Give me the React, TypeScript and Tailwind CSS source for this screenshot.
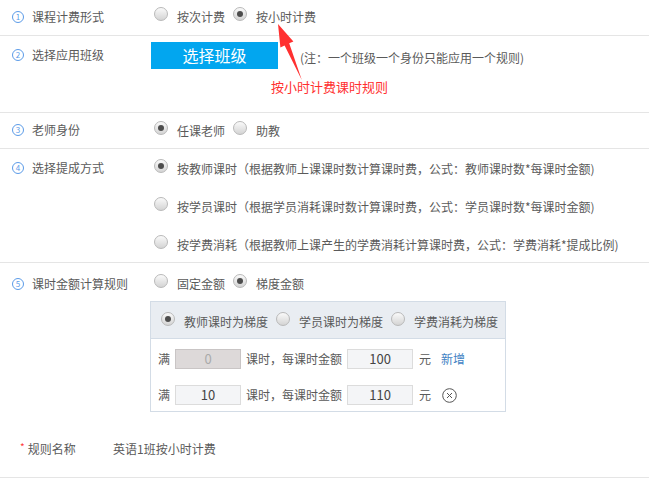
import React from 'react';

const font = { fontFamily: '"Noto Sans CJK SC", "Noto Sans", sans-serif' };

const Radio: React.FC<{ checked?: boolean }> = ({ checked }) => (
  <span className="flex w-[14px] h-[14px] shrink-0 items-center justify-center rounded-full border border-[#b9b9b9] bg-linear-to-b from-[#fafafa] to-[#d4d4d4]">
    {checked && <span className="w-[6px] h-[6px] rounded-full bg-[#4d4d4d]" />}
  </span>
);

const Option: React.FC<{ checked?: boolean; label: string; gap?: string }> = ({ checked, label, gap = 'mr-[8px]' }) => (
  <div className={`flex items-start ${gap}`}>
    <Radio checked={checked} />
    <span className="ml-[9px] mt-[1px] leading-[18px] whitespace-nowrap">{label}</span>
  </div>
);

const StepLabel: React.FC<{ n: number; text: string; pt: string }> = ({ n, text, pt }) => (
  <div className={`self-start w-[150px] shrink-0 pl-[12px] flex items-center gap-[8px] ${pt}`}>
    <span className="flex w-[12px] h-[12px] items-center justify-center rounded-full border border-[#5b9be8] text-[8px] leading-none text-[#5b9be8]">
      {n}
    </span>
    <span className="leading-[16px] whitespace-nowrap">{text}</span>
  </div>
);

const CloseIcon = () => (
  <svg width="15" height="15" viewBox="0 0 15 15" fill="none" stroke="#555" strokeWidth="1">
    <circle cx="7.5" cy="7.5" r="6.8" />
    <path d="M5 5l5 5M10 5l-5 5" />
  </svg>
);

export default function App() {
  return (
    <div className="relative w-[649px] h-[479px] bg-white text-[12px] text-[#5a5a5a] overflow-hidden" style={font}>
      {/* 1 */}
      <div className="flex items-start h-[36px] border-b border-[#e5e5e5]">
        <StepLabel n={1} text="课程计费形式" pt="pt-[9px]" />
        <div className="flex items-start pt-[7px] pl-[4px]">
          <Option label="按次计费" />
          <Option checked label="按小时计费" />
        </div>
      </div>

      {/* 2 */}
      <div className="flex items-start h-[77px] border-b border-[#e5e5e5]">
        <StepLabel n={2} text="选择应用班级" pt="pt-[11px]" />
        <div className="flex items-start pl-[1px]">
          <button className="mt-[6px] w-[127px] h-[27px] bg-[#02a6ef] text-white text-[16px] leading-[27px]">
            选择班级
          </button>
          <span className="ml-[22px] mt-[14px] leading-[16px] whitespace-nowrap">(注：一个班级一个身份只能应用一个规则)</span>
        </div>
      </div>

      {/* 3 */}
      <div className="flex items-start h-[36px] border-b border-[#e5e5e5]">
        <StepLabel n={3} text="老师身份" pt="pt-[9px]" />
        <div className="flex items-start pt-[8px] pl-[4px]">
          <Option checked label="任课老师" />
          <Option label="助教" />
        </div>
      </div>

      {/* 4 */}
      <div className="flex items-start h-[114px] border-b border-[#e5e5e5]">
        <StepLabel n={4} text="选择提成方式" pt="pt-[11px]" />
        <div className="flex flex-col items-start gap-[19px] pt-[10px] pl-[4px]">
          <Option checked label="按教师课时（根据教师上课课时数计算课时费，公式：教师课时数*每课时金额)" />
          <Option label="按学员课时（根据学员消耗课时数计算课时费，公式：学员课时数*每课时金额)" />
          <Option label="按学费消耗（根据教师上课产生的学费消耗计算课时费，公式：学费消耗*提成比例)" />
        </div>
      </div>

      {/* 5 */}
      <div className="flex items-start h-[150px]">
        <StepLabel n={5} text="课时金额计算规则" pt="pt-[13px]" />
        <div className="flex flex-col items-start pt-[11px]">
          <div className="flex items-start pl-[4px]">
            <Option label="固定金额" />
            <Option checked label="梯度金额" />
          </div>
          <div className="mt-[8px] w-[356px] border border-[#d3dce6]">
            <div className="flex items-start h-[37px] pt-[10px] pl-[10px] bg-[#e9edf2] border-b border-[#d3dce6]">
              <Option checked label="教师课时为梯度" />
              <Option label="学员课时为梯度" />
              <Option label="学费消耗为梯度" gap="" />
            </div>
            <div className="flex flex-col gap-[16px] pt-[10px] pb-[6px] pl-[7px]">
              <div className="flex items-center h-[20px]">
                <span>满</span>
                <div className="ml-[5px] w-[66px] h-[20px] border border-[#c9c5c5] bg-[#ddd9d9] text-center text-[13px] leading-[18px] text-[#aaa]">0</div>
                <span className="ml-[5px]">课时，每课时金额</span>
                <div className="ml-[5px] w-[66px] h-[20px] border border-[#dcdcdc] bg-[#f4f5f7] text-center text-[13px] leading-[18px] text-[#444]">100</div>
                <span className="ml-[6px]">元</span>
                <span className="ml-[10px] text-[#3f82c4]">新增</span>
              </div>
              <div className="flex items-center h-[20px]">
                <span>满</span>
                <div className="ml-[5px] w-[66px] h-[20px] border border-[#dcdcdc] bg-[#f4f5f7] text-center text-[13px] leading-[18px] text-[#444]">10</div>
                <span className="ml-[5px]">课时，每课时金额</span>
                <div className="ml-[5px] w-[66px] h-[20px] border border-[#dcdcdc] bg-[#f4f5f7] text-center text-[13px] leading-[18px] text-[#444]">110</div>
                <span className="ml-[6px]">元</span>
                <span className="ml-[11px] flex"><CloseIcon /></span>
              </div>
            </div>
          </div>
        </div>
      </div>

      {/* rule name */}
      <div className="flex items-start h-[65px] pt-[28px] border-b border-[#e5e5e5]">
        <div className="w-[113px] shrink-0 pl-[20px] flex items-start">
          <span className="text-[#ff3b3b] text-[10px] leading-[12px]">*</span>
          <span className="ml-[3px] leading-[16px]">规则名称</span>
        </div>
        <span className="leading-[16px]">英语1班按小时计费</span>
      </div>

      {/* annotation overlay */}
      <svg className="absolute left-0 top-0 pointer-events-none" width="649" height="479">
        <polygon
          points="278,24 280.4,47.5 284.6,45.4 301.8,80 289.2,43.3 293.4,41.4"
          fill="#ff3030"
        />
      </svg>
      <span className="absolute left-[271px] top-[78px] text-[13px] leading-[18px] text-[#ff3030] whitespace-nowrap">
        按小时计费课时规则
      </span>
    </div>
  );
}
